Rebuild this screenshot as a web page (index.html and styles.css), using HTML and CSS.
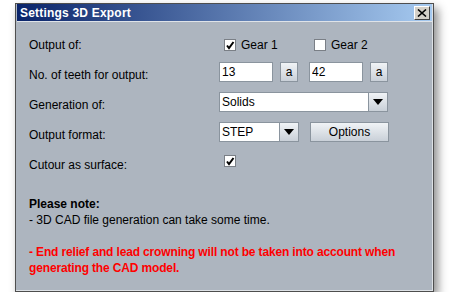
FILE: index.html
```html
<!DOCTYPE html>
<html lang="en">
<head>
    <meta charset="UTF-8">
    <title>Settings 3D Export</title>
    <link rel="stylesheet" href="styles.css">
</head>
<body>
    <div class="window">
        <div class="titlebar">
            <span class="title">Settings 3D Export</span>
            <span class="close">
                <svg width="10" height="8" viewBox="0 0 10 8"><path d="M1 0.5 L9 7.5 M9 0.5 L1 7.5" stroke="#000" stroke-width="1.6"/></svg>
            </span>
        </div>

        <div class="content">
            <div class="form">
                <div class="label">Output of:</div>
                <div class="pair">
                    <label class="check"><span class="box checked"><svg width="10" height="10" viewBox="0 0 10 10"><path d="M2 5.5 L4 8 L8.5 2" fill="none" stroke="#000" stroke-width="2"/></svg></span>Gear 1</label>
                    <label class="check"><span class="box"></span>Gear 2</label>
                </div>

                <div class="label">No. of teeth for output:</div>
                <div class="pair">
                    <div class="group">
                        <input type="text" class="field" value="13">
                        <button class="btn small">a</button>
                    </div>
                    <div class="group">
                        <input type="text" class="field" value="42">
                        <button class="btn small">a</button>
                    </div>
                </div>

                <div class="label">Generation of:</div>
                <div class="combo wide">
                    <span class="combo-text">Solids</span>
                    <span class="arrow"></span>
                </div>

                <div class="label">Output format:</div>
                <div class="pair">
                    <div class="combo">
                        <span class="combo-text">STEP</span>
                        <span class="arrow"></span>
                    </div>
                    <button class="btn">Options</button>
                </div>

                <div class="label">Cutour as surface:</div>
                <div class="pair">
                    <label class="check"><span class="box checked"><svg width="10" height="10" viewBox="0 0 10 10"><path d="M2 5.5 L4 8 L8.5 2" fill="none" stroke="#000" stroke-width="2"/></svg></span></label>
                </div>
            </div>

            <div class="note">
                <div class="note-title">Please note:</div>
                <div>- 3D CAD file generation can take some time.</div>
                <div class="warning">- End relief and lead crowning will not be taken into account when generating the CAD model.</div>
            </div>
        </div>
    </div>
</body>
</html>
```

FILE: styles.css
```css
body {
    margin: 0;
    background-color: #fff;
    font-family: "Liberation Sans", Arial, sans-serif;
    font-size: 12px;
    color: #000;
}
.window {
    box-sizing: border-box;
    width: 419px;
    height: 289px;
    margin: 3px 0 0 15px;
    border: 1px solid #4e4e4e;
    background-color: #adb5bf;
    box-shadow: inset -1px -1px 0 #dde1e5, 4px 5px 9px rgba(0, 0, 0, 0.45);
    padding: 0 1px 1px 1px;
}
.titlebar {
    height: 17px;
    display: flex;
    align-items: center;
    justify-content: space-between;
    padding: 0 2px 0 3px;
    background: linear-gradient(to right, #0a246a, #a6caf0);
    border-bottom: 1px solid #dfe3e8;
}
.title {
    color: #fff;
    font-weight: bold;
    font-size: 12px;
    letter-spacing: 0.2px;
}
.close {
    box-sizing: border-box;
    width: 16px;
    height: 14px;
    display: flex;
    align-items: center;
    justify-content: center;
    background-color: #d4d0c8;
    border: 1px solid;
    border-color: #fff #404040 #404040 #fff;
}
.content {
    padding: 10px 0 0 12px;
}
.form {
    display: grid;
    grid-template-columns: 190px 1fr;
    grid-auto-rows: 30px;
}
.label {
    line-height: 20px;
    padding-top: 3px;
}
.pair {
    display: flex;
    gap: 11px;
    align-items: flex-start;
}
.check {
    width: 90px;
    display: flex;
    align-items: center;
    line-height: 20px;
    padding-top: 3px;
}
.box {
    box-sizing: border-box;
    width: 12px;
    height: 12px;
    margin: 0 5px 0 5px;
    background-color: #fff;
    border: 1px solid #7a7f86;
    display: flex;
    align-items: center;
    justify-content: center;
}
.pair .check + .check {
    margin-left: -11px;
}
.group {
    display: flex;
    gap: 7px;
}
.field {
    box-sizing: border-box;
    width: 54px;
    height: 20px;
    margin: 0;
    padding: 0 2px;
    border: 1px solid #8a949e;
    font-family: "Liberation Sans", Arial, sans-serif;
    font-size: 12px;
    background-color: #fff;
}
.btn {
    box-sizing: border-box;
    height: 20px;
    width: 79px;
    padding: 0;
    border: 1px solid #8a949e;
    background: linear-gradient(#f0f3f6, #c9d0d8);
    font-family: "Liberation Sans", Arial, sans-serif;
    font-size: 12px;
    color: #000;
}
.btn.small {
    width: 18px;
}
.combo {
    box-sizing: border-box;
    width: 80px;
    height: 20px;
    display: flex;
    border: 1px solid #8a949e;
    background-color: #fff;
}
.combo.wide {
    width: 169px;
}
.combo-text {
    flex: 1;
    line-height: 18px;
    padding-left: 2px;
}
.arrow {
    width: 18px;
    border-left: 1px solid #8a949e;
    background: linear-gradient(#f0f3f6, #c9d0d8);
    display: flex;
    align-items: center;
    justify-content: center;
}
.arrow::after {
    content: "";
    border-left: 5px solid transparent;
    border-right: 5px solid transparent;
    border-top: 6px solid #000;
}
.note {
    margin-top: 14px;
    line-height: 16px;
}
.note-title {
    font-weight: bold;
}
.warning {
    margin-top: 16px;
    color: #ff0000;
    font-weight: bold;
    letter-spacing: -0.15px;
    width: 380px;
}
```
